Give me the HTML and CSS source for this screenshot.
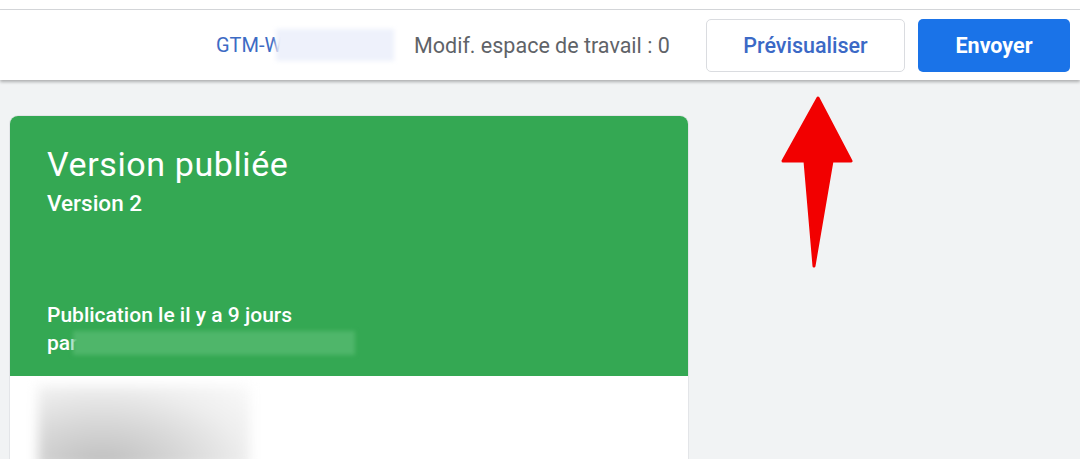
FILE: index.html
```html
<!DOCTYPE html>
<html lang="fr">
<head>
<meta charset="utf-8">
<title>Version publiée</title>
<link rel="stylesheet" href="styles.css">
</head>
<body>
<div class="topstrip"></div>
<header class="toolbar">
  <div class="container-id">
    <span class="gtm">GTM-W</span><span class="redact redact-blue"></span>
  </div>
  <div class="changes">Modif. espace de travail : 0</div>
  <button class="btn btn-outline">Prévisualiser</button>
  <button class="btn btn-primary">Envoyer</button>
</header>
<main class="content">
  <section class="card">
    <div class="card-head">
      <div class="titles">
        <h1 class="title">Version publiée</h1>
        <div class="subtitle">Version 2</div>
      </div>
      <div class="meta">
        <div class="meta-line">Publication le il y a 9 jours</div>
        <div class="meta-line">par<span class="redact redact-green"></span></div>
      </div>
    </div>
    <div class="card-body">
      <div class="blob"></div>
    </div>
  </section>
</main>
<svg class="arrow" width="80" height="180" viewBox="778 94 80 180" aria-hidden="true">
  <polygon points="818,98 851,161 832,161 814,266 805,161 783,161" fill="#f20000" stroke="#f20000" stroke-width="3" stroke-linejoin="round"/>
</svg>
</body>
</html>
```
FILE: styles.css
```css
html, body {
  margin: 0;
  padding: 0;
}
body {
  width: 1080px;
  height: 459px;
  overflow: hidden;
  background: #f1f3f4;
  font-family: Roboto, "Liberation Sans", Arial, sans-serif;
  position: relative;
}
.topstrip {
  height: 9px;
  background: #ffffff;
  border-bottom: 1px solid #d6d8db;
}
.toolbar {
  height: 70px;
  background: #ffffff;
  display: flex;
  align-items: center;
  padding-left: 216px;
  padding-right: 10px;
  box-shadow: 0 2px 3px rgba(0, 0, 0, 0.28);
  position: relative;
  z-index: 1;
}
.container-id {
  display: flex;
  align-items: center;
  width: 174px;
  flex: none;
}
.gtm {
  color: #3d6bc4;
  font-size: 20px;
  white-space: nowrap;
  flex: none;
}
.redact {
  display: inline-block;
  filter: blur(2px);
  flex: none;
}
.redact-blue {
  width: 118px;
  height: 32px;
  margin-left: -6px;
  background: #eef1fb;
}
.changes {
  color: #5f6368;
  font-size: 21.5px;
  margin-left: 24px;
  white-space: nowrap;
}
.btn {
  font-family: Roboto, "Liberation Sans", Arial, sans-serif;
  font-size: 21.5px;
  font-weight: 500;
  height: 53px;
  border-radius: 5px;
  cursor: pointer;
  padding: 0;
  flex: none;
}
.btn-outline {
  width: 199px;
  margin-left: auto;
  background: #ffffff;
  color: #3b69c6;
  border: 1px solid #dadce0;
}
.btn-primary {
  width: 152px;
  margin-left: 13px;
  background: #1a73e8;
  color: #ffffff;
  border: none;
  font-weight: 700;
}
.content {
  padding: 36px 392px 0 10px;
}
.card {
  background: #ffffff;
  border-radius: 8px 8px 0 0;
  box-shadow: 0 0 0 1px #e3e5e8;
  height: 360px;
}
.card-head {
  background: #34a853;
  border-radius: 8px 8px 0 0;
  height: 260px;
  box-sizing: border-box;
  padding: 28px 30px 19px 37px;
  color: #ffffff;
  display: flex;
  flex-direction: column;
  justify-content: space-between;
}
.title {
  margin: 0;
  font-size: 34px;
  font-weight: 400;
  line-height: 40px;
  letter-spacing: 0.6px;
}
.subtitle {
  font-size: 22.5px;
  font-weight: 500;
  line-height: 28px;
  margin-top: 5px;
}
.meta-line {
  font-size: 21px;
  font-weight: 500;
  line-height: 28px;
  display: flex;
  align-items: center;
  white-space: nowrap;
}
.redact-green {
  width: 282px;
  height: 24px;
  background: #4fb66a;
  margin-left: -5px;
}
.card-body {
  padding: 10px 0 0 28px;
  overflow: hidden;
  height: 90px;
}
.blob {
  width: 212px;
  height: 82px;
  background: radial-gradient(ellipse at 30% 100%, #bdbdbd 0%, #d8d8d8 40%, #eeeeee 70%, #fafafa 100%);
  filter: blur(6px);
}
.arrow {
  position: absolute;
  left: 778px;
  top: 94px;
  z-index: 2;
}
```
